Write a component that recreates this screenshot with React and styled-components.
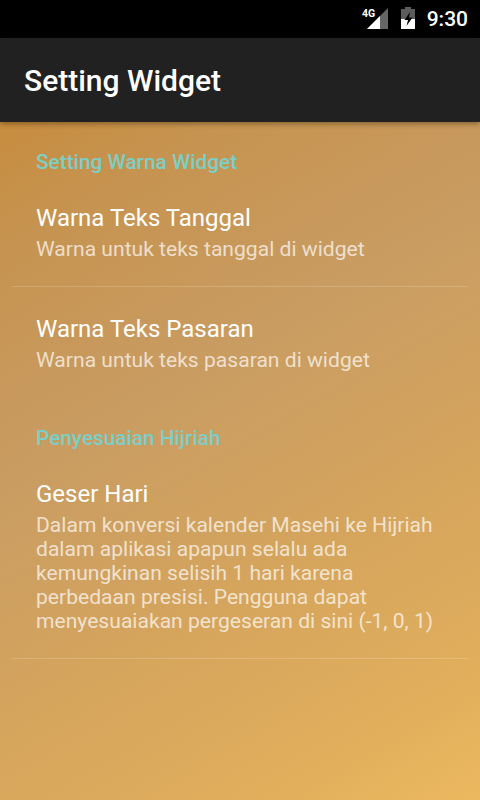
import React from 'react';
import styled, { createGlobalStyle } from 'styled-components';

const Global = createGlobalStyle`
  html, body {
    margin: 0;
    padding: 0;
  }
  body {
    font-family: Roboto, "Liberation Sans", sans-serif;
  }
`;

const Screen = styled.div`
  width: 480px;
  height: 800px;
  overflow: hidden;
  display: flex;
  flex-direction: column;
  background: linear-gradient(150deg, #c8842c 0%, #c6934f 22%, #c99c62 45%, #d5a55d 68%, #e1ae5c 88%, #ecb960 100%);
`;

const StatusBar = styled.div`
  height: 38px;
  flex: none;
  background: #000;
  display: flex;
  align-items: center;
  justify-content: flex-end;
  padding-right: 12px;
`;

const Clock = styled.span`
  color: #fff;
  font-size: 21px;
  font-weight: 500;
  margin-left: 12px;
  line-height: 38px;
`;

const BatteryIcon = styled.svg`
  margin-left: 13px;
`;

const AppBar = styled.header`
  height: 84px;
  flex: none;
  background: #212121;
  display: flex;
  align-items: center;
  padding-left: 24px;
  box-shadow: 0 2px 5px rgba(60, 40, 10, 0.45);
  position: relative;
`;

const Title = styled.h1`
  margin: 0;
  color: #fff;
  font-size: 30px;
  font-weight: 500;
`;

const Content = styled.main`
  flex: 1;
  padding-top: 28px;
`;

const SectionTitle = styled.h2`
  margin: ${p => (p.$first ? '0' : '54px')} 0 0 36px;
  color: #7ccfc6;
  font-size: 20.8px;
  line-height: 24px;
  font-weight: 500;
`;

const Item = styled.div`
  padding: ${p => p.$top || 28}px 24px 0 36px;
`;

const ItemTitle = styled.div`
  color: #fff;
  font-size: 24px;
  line-height: 32px;
`;

const ItemText = styled.div`
  color: rgba(255, 255, 255, 0.7);
  font-size: 21.1px;
  line-height: 24px;
  margin-top: 3px;
`;

const Divider = styled.div`
  height: 1px;
  margin: ${p => p.$top}px 12px 0;
  background: rgba(255, 255, 255, 0.18);
`;

export default function App() {
  return (
    <Screen>
      <Global />
      <StatusBar>
        <svg width="28" height="22" viewBox="0 0 28 22">
          <path d="M28 0V21H7z" fill="#666" />
          <path d="M20 8V21H7z" fill="#fff" />
          <text x="2" y="9" fill="#fff" fontSize="10.5" fontWeight="700" fontFamily="Roboto, sans-serif">4G</text>
        </svg>
        <BatteryIcon width="14" height="24" viewBox="0 0 14 24">
          <path d="M4 0h6v2h4v20H0V2h4z" fill="#5c5c5c" />
          <path d="M0 12h14v10H0z" fill="#fff" />
          <path d="M9 5 3.5 13H7L5.5 19 11.5 10.5H8z" fill="#000" />
        </BatteryIcon>
        <Clock>9:30</Clock>
      </StatusBar>
      <AppBar>
        <Title>Setting Widget</Title>
      </AppBar>
      <Content>
        <SectionTitle $first>Setting Warna Widget</SectionTitle>
        <Item>
          <ItemTitle>Warna Teks Tanggal</ItemTitle>
          <ItemText>Warna untuk teks tanggal di widget</ItemText>
        </Item>
        <Divider $top={25} />
        <Item $top={26}>
          <ItemTitle>Warna Teks Pasaran</ItemTitle>
          <ItemText>Warna untuk teks pasaran di widget</ItemText>
        </Item>
        <SectionTitle>Penyesuaian Hijriah</SectionTitle>
        <Item>
          <ItemTitle>Geser Hari</ItemTitle>
          <ItemText>
            Dalam konversi kalender Masehi ke Hijriah<br />
            dalam aplikasi apapun selalu ada<br />
            kemungkinan selisih 1 hari karena<br />
            perbedaan presisi. Pengguna dapat<br />
            menyesuaiakan pergeseran di sini (-1, 0, 1)
          </ItemText>
        </Item>
        <Divider $top={25} />
      </Content>
    </Screen>
  );
}
